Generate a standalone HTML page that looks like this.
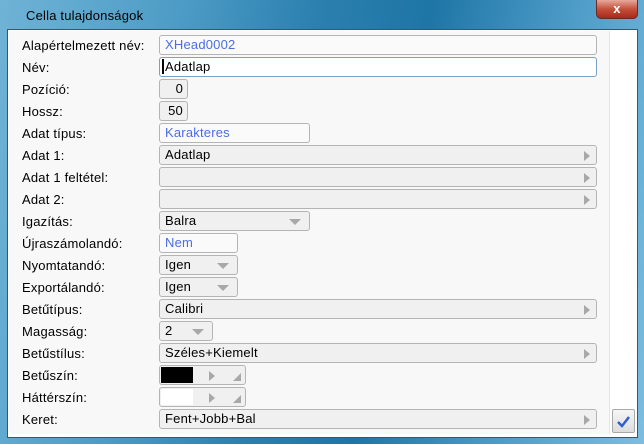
<!DOCTYPE html>
<html><head><meta charset="utf-8"><style>
*{margin:0;padding:0;box-sizing:border-box}
body{width:644px;height:444px;overflow:hidden;position:relative;font-family:"Liberation Sans",sans-serif;font-size:13px;letter-spacing:0.2px;color:#000;
background:linear-gradient(100deg,#6fb3d6 0%,#4d9cc6 25%,#2a7fae 45%,#1e76a6 60%,#4e9cc8 80%,#7cbde0 100%)}
.client{position:absolute;left:7px;top:29px;width:631px;height:409px;background:#fff;border:1px solid #3a5570}
.panel{position:absolute;left:9px;top:31px;width:601px;height:403px;background:#f8f8f8;border-right:1px solid #e4e4e4}
.title{position:absolute;left:26px;top:8px;font-size:13px;color:#000}
.close{position:absolute;left:596px;top:0;width:42px;height:19px;border:1px solid #6b2a22;border-top:none;border-radius:0 0 5px 5px;
background:linear-gradient(#e8a99c,#c4503c 50%,#a82a18);color:#fff;font-weight:bold;text-align:center;font-size:13px;line-height:17px}
.l{position:absolute;left:22px;line-height:14px}
.f{position:absolute;left:159px;height:20px;border:1px solid #b4b4b4;border-radius:3px;background:#f0f0f0;padding-left:5px;line-height:18px}
.w{background:#fafafa}
.blue{color:#4a6ee0}
.arr{position:absolute;right:6px;top:5px;width:0;height:0;border-left:6px solid #a8a8a8;border-top:5px solid transparent;border-bottom:5px solid transparent}
.dd{position:absolute;right:8px;top:7px;width:0;height:0;border-top:6px solid #a8a8a8;border-left:6px solid transparent;border-right:6px solid transparent}
.num{text-align:right;padding-right:4px}
.btn{position:absolute;left:612px;top:409px;width:23px;height:24px;border:1px solid #a8a8a8;border-radius:2px;background:linear-gradient(#f6f6f6,#dcdcdc)}
</style></head><body>
<div class="title">Cella tulajdonságok</div>
<div class="close">x</div>
<div class="client"></div>
<div class="panel"></div>

<div class="l" style="top:39px">Alapértelmezett név:</div>
<div class="f w blue" style="top:35px;width:438px">XHead0002</div>

<div class="l" style="top:61px">Név:</div>
<div class="f" style="top:57px;width:438px;background:#fff;border-color:#7aa0c8;padding-left:2px"><span style="border-left:2px solid #000;padding-left:1px">Adatlap</span></div>

<div class="l" style="top:83px">Pozíció:</div>
<div class="f num" style="top:79px;width:29px">0</div>
<div class="l" style="top:105px">Hossz:</div>
<div class="f num" style="top:101px;width:29px">50</div>

<div class="l" style="top:127px">Adat típus:</div>
<div class="f w blue" style="top:123px;width:151px">Karakteres</div>

<div class="l" style="top:149px">Adat 1:</div>
<div class="f" style="top:145px;width:438px">Adatlap<div class="arr"></div></div>
<div class="l" style="top:171px">Adat 1 feltétel:</div>
<div class="f" style="top:167px;width:438px"><div class="arr"></div></div>
<div class="l" style="top:193px">Adat 2:</div>
<div class="f" style="top:189px;width:438px"><div class="arr"></div></div>

<div class="l" style="top:215px">Igazítás:</div>
<div class="f" style="top:211px;width:151px">Balra<div class="dd"></div></div>

<div class="l" style="top:237px">Újraszámolandó:</div>
<div class="f w blue" style="top:233px;width:79px">Nem</div>

<div class="l" style="top:259px">Nyomtatandó:</div>
<div class="f" style="top:255px;width:79px">Igen<div class="dd"></div></div>
<div class="l" style="top:281px">Exportálandó:</div>
<div class="f" style="top:277px;width:79px">Igen<div class="dd"></div></div>

<div class="l" style="top:303px">Betűtípus:</div>
<div class="f" style="top:299px;width:438px">Calibri<div class="arr"></div></div>
<div class="l" style="top:325px">Magasság:</div>
<div class="f" style="top:321px;width:54px">2<div class="dd"></div></div>
<div class="l" style="top:347px">Betűstílus:</div>
<div class="f" style="top:343px;width:438px">Széles+Kiemelt<div class="arr"></div></div>

<div class="l" style="top:369px">Betűszín:</div>
<div class="f" style="top:365px;width:87px;padding:0"><div style="position:absolute;left:1px;top:1px;width:32px;height:16px;background:#000"></div><div class="arr" style="right:30px"></div><div style="position:absolute;right:4px;bottom:3px;width:0;height:0;border-bottom:8px solid #a8a8a8;border-left:8px solid transparent"></div></div>
<div class="l" style="top:391px">Háttérszín:</div>
<div class="f" style="top:387px;width:87px;padding:0"><div style="position:absolute;left:1px;top:1px;width:32px;height:16px;background:#fff"></div><div class="arr" style="right:30px"></div><div style="position:absolute;right:4px;bottom:3px;width:0;height:0;border-bottom:8px solid #a8a8a8;border-left:8px solid transparent"></div></div>

<div class="l" style="top:413px">Keret:</div>
<div class="f" style="top:409px;width:438px">Fent+Jobb+Bal<div class="arr"></div></div>

<div class="btn"><svg width="21" height="22" viewBox="0 0 21 22"><path d="M5 12 L9 16 L16 7" stroke="#2f5fd0" stroke-width="2.5" fill="none"/></svg></div>
</body></html>
